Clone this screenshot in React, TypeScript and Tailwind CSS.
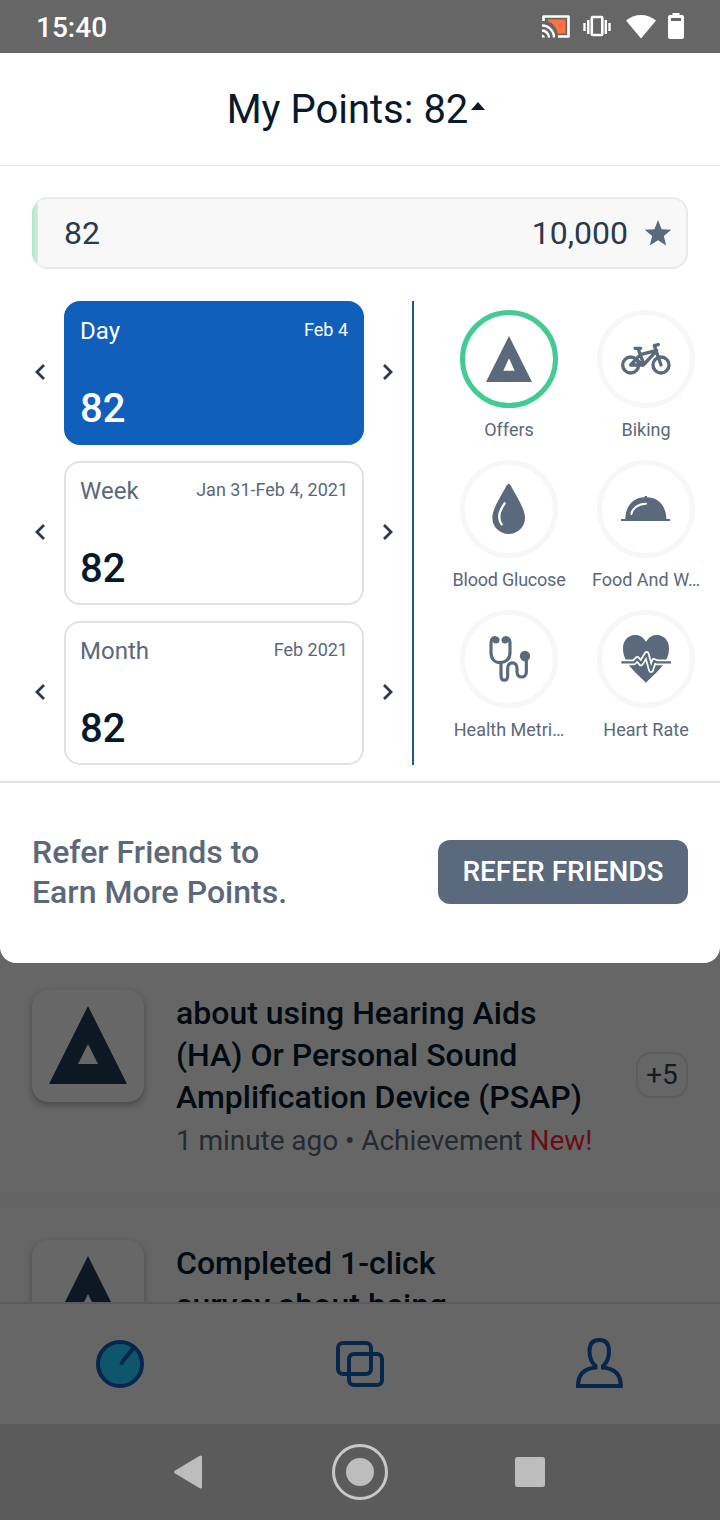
import { ReactNode } from "react";

type Period = {
  label: string
  range: string
  points: number
  active?: boolean
}

type Category = {
  label: string
  icon: ReactNode
  active?: boolean
  tight?: boolean
}

const periods: Period[] = [
  { label: 'Day', range: 'Feb 4', points: 82, active: true },
  { label: 'Week', range: 'Jan 31-Feb 4, 2021', points: 82 },
  { label: 'Month', range: 'Feb 2021', points: 82 },
]

// Category icons, all drawn on the same 264 grid
const categories: Category[] = [
  {
    label: 'Offers',
    active: true,
    icon: <path fill="currentColor" fillRule="evenodd" d="M147 78 216 216H78ZM147 145 130 182H164Z" />,
  },
  {
    label: 'Biking',
    icon: (
      <g fill="none" stroke="currentColor" strokeWidth="10" strokeLinecap="round" strokeLinejoin="round">
        <circle cx="101" cy="165" r="24" />
        <circle cx="192" cy="165" r="24" />
        <path d="M114 115H131M124 117 130 136 141 162M101 165H139L177 124M101 165 130 134 179 121M184 104 172 107 192 165" />
        <path d="M120 150 132 160" />
      </g>
    ),
  },
  {
    label: 'Blood Glucose',
    tight: true,
    icon: (
      <>
        <path fill="currentColor" d="M146 71Q149 71 152 76C165 103 195 145 195 173A49 49 0 0 1 97 173C97 145 127 103 140 76Q143 71 146 71Z" />
        <path fill="none" stroke="#fff" strokeWidth="7" strokeLinecap="round" d="M134 130C116 155 112 175 125 193" />
      </>
    ),
  },
  {
    label: 'Food And W…',
    icon: (
      <>
        <path fill="currentColor" d="M72 177H85C85 136 112 112 143 112V108H150V112C181 112 208 136 208 177H219V183H72Z" />
        <path fill="none" stroke="#fff" strokeWidth="6" strokeLinecap="round" d="M103 162C106 145 124 131 147 131" />
      </>
    ),
  },
  {
    label: 'Health Metri…',
    icon: (
      <>
        <path
          fill="none"
          stroke="currentColor"
          strokeWidth="9.500"
          strokeLinecap="round"
          d="M104 83Q93 85 93 100V128C93 148 106 158 121 158C136 158 150 148 150 128V100Q150 85 138 83M123 158V197C123 215 143 215 143 197V175C143 153 171 153 171 175V186C171 206 199 206 199 186V150"
        />
        <circle cx="108" cy="90" r="10.500" fill="currentColor" />
        <circle cx="135" cy="90" r="10.500" fill="currentColor" />
        <circle cx="195" cy="138" r="15.500" fill="currentColor" />
      </>
    ),
  },
  {
    label: 'Heart Rate',
    icon: (
      <>
        <path fill="currentColor" d="M147 96C137 76 118 73 106 76C86 82 78 98 78 116C78 160 120 190 147 218C174 190 216 160 216 116C216 98 208 82 188 76C176 73 157 76 147 96Z" />
        <g fill="none" strokeLinejoin="round">
          <path stroke="#fff" strokeWidth="17" d="M73 157H111L121 147 132 160 149 132 162 180 171 153 180 157H222" />
          <path stroke="currentColor" strokeWidth="7" d="M73 157H111L121 147 132 160 149 132 162 180 171 153 180 157H222" />
        </g>
      </>
    ),
  },
]

const StatusBar = () => (
  <div className="flex h-[53px] shrink-0 items-center justify-between bg-[#666666] pl-9 pr-9 text-white">
    <span className="pt-0.5 text-[28px] font-medium leading-[51px]">15:40</span>
    <svg className="h-[30px] w-[144px]" viewBox="0 0 144 30" fill="none">
      <path d="M3.500 9V4.500H28.500V24.500H18" stroke="#fff" strokeWidth="2.600" strokeLinejoin="round" />
      <path d="M8 7.500H25.500V21.500H18C16 15 13 11 8 9.500Z" fill="#ff7043" />
      <path d="M2 13.500A12 12 0 0 1 14 25.500M2 18.500A7 7 0 0 1 9 25.500" stroke="#fff" strokeWidth="2.400" />
      <path d="M2 22.500A3.500 3.500 0 0 1 5 25.500H2Z" fill="#fff" />
      <rect x="51.800" y="5" width="10.500" height="18" rx="1" stroke="#fff" strokeWidth="2.600" />
      <path d="M44.500 11V19M48.300 8V22M65.800 8V22M69.500 11V19" stroke="#fff" strokeWidth="2.400" />
      <path d="M86 8.500C94.500 1 107.500 1 116 8.500L101 26.500Z" fill="#fff" />
      <path fillRule="evenodd" d="M132.500 1H139.500V3H142Q144 3 144 5V25Q144 27 142 27H130Q128 27 128 25V5Q128 3 130 3H132.500ZM131 6V9H141V6Z" fill="#fff" />
    </svg>
  </div>
)

const Chevron = ({ right }: { right?: boolean }) => (
  <button className="flex h-full w-4 items-center justify-center pb-0.5">
    <svg className="size-4" viewBox="0 0 16 16" fill="none" stroke="#2b3a4a" strokeWidth="2.800">
      <path d={right ? "M4 1 11 8 4 15" : "M12 1 5 8 12 15"} />
    </svg>
  </button>
)

const PeriodRow = ({ label, range, points, active }: Period) => (
  <div className="flex h-36 items-center gap-4">
    <Chevron />
    <div
      className={`flex h-36 w-[300px] flex-col justify-between rounded-[16px] border-2 px-3.5 pb-3.5 pt-3 ${active ? "border-[#0f5fbb] bg-[#0f5fbb] text-white" : "border-[#e1e2e3] bg-white text-[#5c6879]"}`}
    >
      <div className="flex items-center justify-between">
        <span className="text-[24px] leading-8">{label}</span>
        <span className="pb-0.5 text-[18px] leading-7">{range}</span>
      </div>
      <span className={`text-[40px] font-medium leading-[40px] ${active ? "text-white" : "text-[#071a2b]"}`}>{points}</span>
    </div>
    <Chevron right />
  </div>
)

const CategoryItem = ({ label, icon, active, tight }: Category) => (
  <div className="flex h-[150px] w-[137px] flex-col items-center">
    <div className={`size-[98px] rounded-full border-[5px] ${active ? "border-[#42cb93]" : "border-[#f7f7f7]"}`}>
      <svg className="size-[88px] text-[#5b697d]" viewBox="15 15 264 264">{icon}</svg>
    </div>
    <span className={`mt-2.5 whitespace-nowrap pl-px text-[18px] leading-6 text-[#5c6879] ${tight ? "tracking-[-0.22px]" : ""}`}>{label}</span>
  </div>
)

const OfferTile = () => (
  <div className="size-28 shrink-0 rounded-[16px] bg-[#676767] shadow-[0_3px_7px_rgba(0,0,0,0.3)]">
    <svg className="size-28" viewBox="0 0 112 112">
      <path fill="#0e1822" fillRule="evenodd" d="M56 16 95 94H17ZM56 54 46 74H66Z" />
    </svg>
  </div>
)

const Feed = () => (
  <div className="flex h-[339px] shrink-0 flex-col overflow-hidden">
    <div className="flex h-[229px] shrink-0 pl-8 pr-8 pt-[27px]">
      <OfferTile />
      <div className="ml-8 w-[460px] shrink-0 pt-0.5">
        <p className="text-[32px] font-medium leading-[42px] text-[#020a12]">
          about using Hearing Aids<br />(HA) Or Personal Sound<br />Amplification Device (PSAP)
        </p>
        <p className="mt-[3px] text-[28px] leading-[40px] tracking-[-0.06px] text-[#252a31]">
          1 minute ago • Achievement <span className="text-[#680e14]">New!</span>
        </p>
      </div>
      <div className="mt-[62px] flex h-[46px] w-[52px] shrink-0 items-center justify-center rounded-[15px] border-2 border-[#5c5d5e] text-[28px] text-[#121a22]">+5</div>
    </div>
    <div className="h-4 shrink-0 bg-[#636363]" />
    <div className="flex h-[250px] shrink-0 pl-8 pt-8">
      <OfferTile />
      <p className="ml-8 pt-0.5 text-[32px] font-medium leading-[42px] text-[#020a12]">Completed 1-click<br />survey about being</p>
    </div>
  </div>
)

const TabBar = () => (
  <div className="grid h-[122px] shrink-0 grid-cols-3 items-center justify-items-center border-t-2 border-[#5b5b5b] bg-[#666666]">
    <svg className="size-14" viewBox="0 0 56 56" fill="none" stroke="#06264b" strokeWidth="4">
      <circle cx="28" cy="28" r="22" fill="#0e566b" />
      <path strokeLinecap="round" d="M29.500 27 41 12.500" />
    </svg>
    <svg className="size-14" viewBox="0 0 56 56" fill="none" stroke="#06264b" strokeWidth="4">
      <rect x="6" y="7" width="33" height="31" rx="5" />
      <rect x="17" y="18" width="33" height="31" rx="5" />
    </svg>
    <svg className="size-14" viewBox="0 0 56 56" fill="none" stroke="#06264b" strokeWidth="4">
      <path d="M23.500 30C20 27 17.500 23 17.500 15C17.500 7.500 21 4 27.300 4C33.500 4 37 7.500 37 15C37 23 34.500 27 31 30V31.500C42 32.500 48.800 38 48.800 50H6C6 38 12.500 32.500 23.500 31.500Z" />
    </svg>
  </div>
)

const SystemNav = () => (
  <div className="flex h-24 shrink-0 items-center justify-center bg-[#5b5b5b]">
    <svg className="h-16 w-[400px]" viewBox="0 0 400 64" fill="#bdbdbd">
      <path d="M40.500 17V47L15.500 32Z" stroke="#bdbdbd" strokeWidth="3" strokeLinejoin="round" />
      <circle cx="200" cy="32" r="26.500" fill="none" stroke="#c8c8c8" strokeWidth="3" />
      <circle cx="200" cy="32" r="14" />
      <rect x="355" y="17" width="30" height="30" rx="2.500" />
    </svg>
  </div>
)

const App = () => (
  <div className="flex h-[1520px] w-[720px] flex-col overflow-hidden bg-[#666666] font-[Roboto,sans-serif]">
    <StatusBar />

    <div className="flex h-[910px] shrink-0 flex-col rounded-b-[16px] bg-white">
      <header className="flex h-[113px] shrink-0 items-center justify-center gap-[3px] border-b border-[#e8e8e8] pr-2">
        <h1 className="pt-0.5 text-[40px] leading-[48px] text-[#071a2b]">My Points: 82</h1>
        <svg className="mb-1.5 h-2 w-[14px]" viewBox="0 0 14 8" fill="#071a2b">
          <path d="M7 0 14 8H0Z" />
        </svg>
      </header>

      <div className="mx-8 mt-[31px] flex h-[72px] shrink-0 overflow-hidden rounded-[16px] border-2 border-l-0 border-[#e9eaea] bg-[#f8f8f8]">
        <div className="-my-0.5 w-[6px] bg-linear-to-r from-[#b0e4cd] to-[#cfeee0]" />
        <div className="flex flex-1 items-center justify-between pl-[26px] pr-3.5 text-[32px] text-[#2b3a4a]">
          <span>82</span>
          <div className="flex items-center gap-4">
            <span>10,000</span>
            <svg className="h-7 w-7" viewBox="0 0 28 28" fill="#5b697d">
              <path d="M14 1 17.600 10.200 27.300 10.800 19.800 17 22.200 26.400 14 21.200 5.800 26.400 8.200 17 .700 10.800 10.400 10.200Z" />
            </svg>
          </div>
        </div>
      </div>

      <div className="mt-8 flex h-[464px] shrink-0 pl-8">
        <div className="flex flex-col gap-4">
          {periods.map((period) => <PeriodRow key={period.label} {...period} />)}
        </div>
        <div className="ml-4 h-full w-0.5 bg-[#22558f]" />
        <div className="ml-[26px] grid grid-cols-2 content-start pt-[9px]">
          {categories.map((category) => <CategoryItem key={category.label} {...category} />)}
        </div>
      </div>

      <div className="mt-4 flex flex-1 items-center justify-between border-t-2 border-[#e1e2e3] px-8 pb-0.5">
        <p className="text-[32px] font-medium leading-10 text-[#5c6879]">Refer Friends to<br />Earn More Points.</p>
        <button className="h-16 w-[250px] rounded-[12px] bg-[#5b697d] text-[28px] font-medium text-white">REFER FRIENDS</button>
      </div>
    </div>

    <Feed />
    <TabBar />
    <SystemNav />
  </div>
)

export default App
